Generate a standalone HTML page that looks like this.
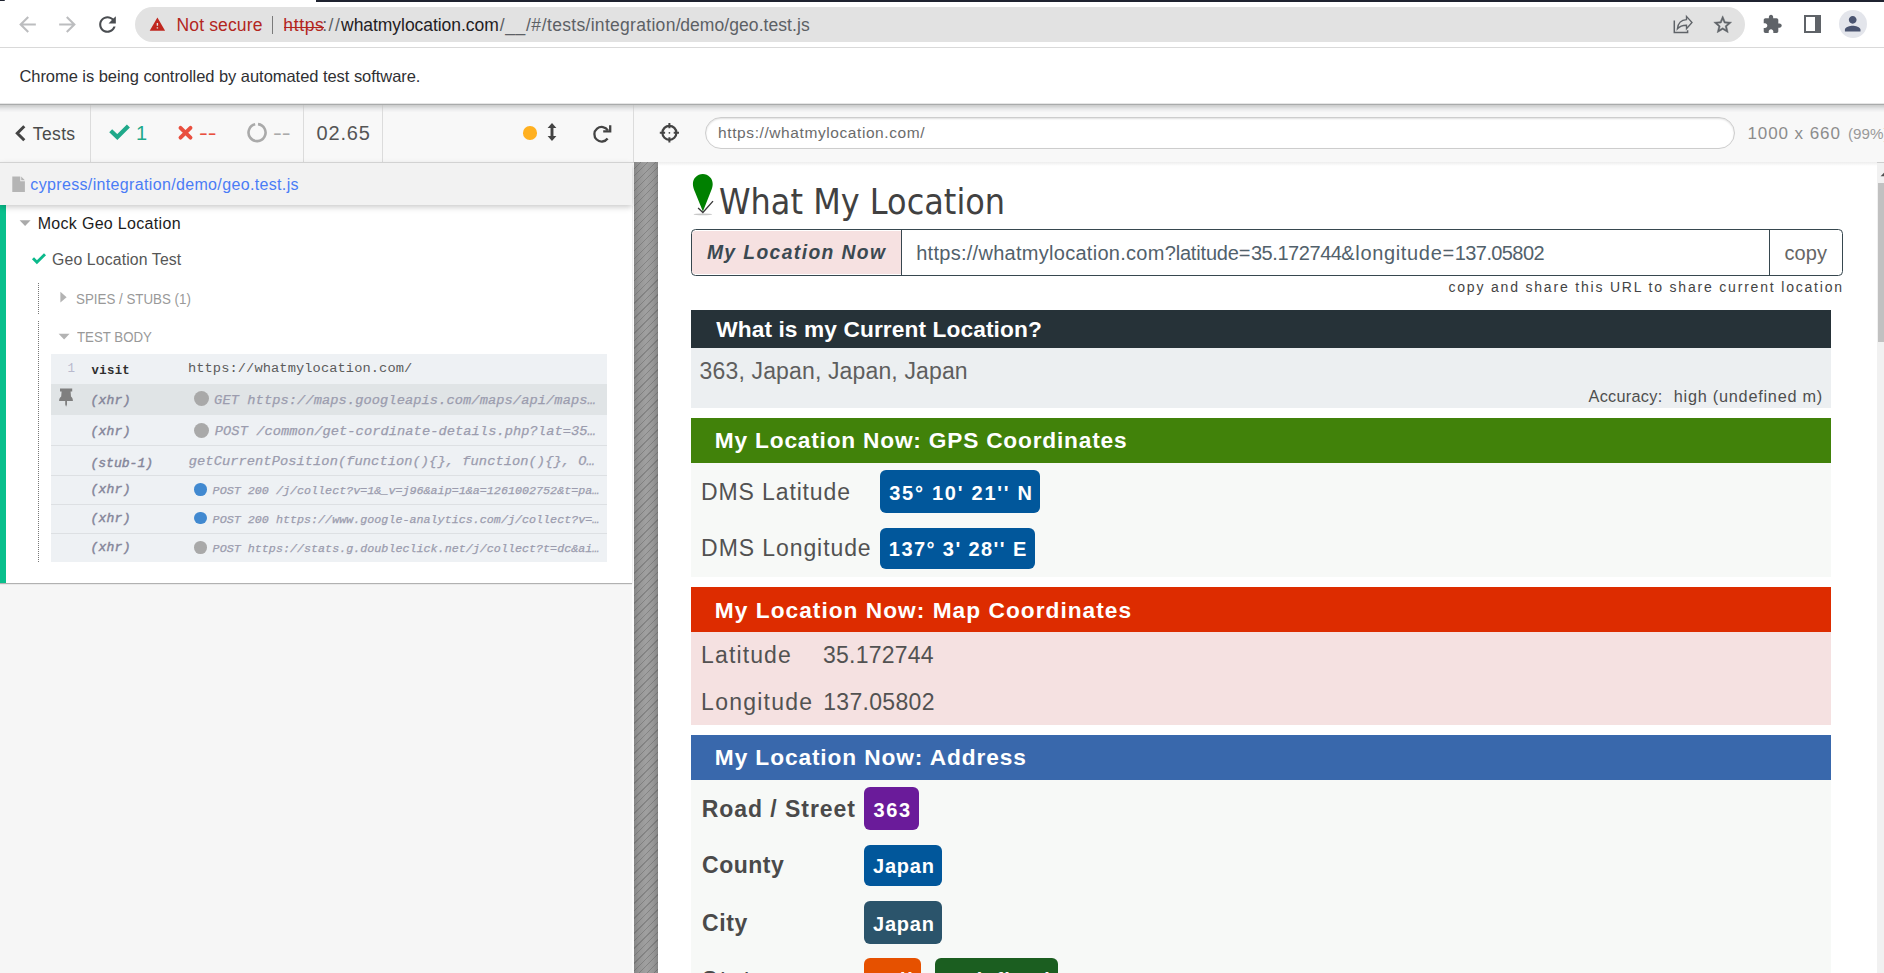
<!DOCTYPE html>
<html lang="en">
<head>
<meta charset="utf-8">
<title>geo.test.js</title>
<style>
*{box-sizing:border-box;margin:0;padding:0}
html,body{width:1884px;height:973px;overflow:hidden;background:#fff;font-family:"Liberation Sans",sans-serif}
#root{position:relative;width:1884px;height:973px;overflow:hidden;background:#fff}
#root div,#root svg{position:absolute}
.t{position:absolute;white-space:pre;line-height:1}
</style>
</head>
<body>
<div id="root">
<!-- browser toolbar -->
<div style="left:316px;top:0px;width:1568px;height:1.7px;background:#1f2330"></div>
<div style="left:0px;top:0px;width:5px;height:1px;background:#1f2330;border-radius:0 0 5px 0"></div>
<div style="left:134.7px;top:6.8px;width:1610.3px;height:35.3px;border-radius:18px;background:#e2e2e2"></div>
<div style="left:0px;top:47px;width:1884px;height:1px;background:#d9d9d9"></div>
<svg style="left:14.8px;top:11.6px;" width="25" height="25" viewBox="0 0 24 24"><path fill="#bcbdbf" d="M20 11H7.83l5.59-5.59L12 4l-8 8 8 8 1.41-1.41L7.83 13H20v-2z"/></svg>
<svg style="left:55px;top:11.6px;" width="25" height="25" viewBox="0 0 24 24"><path fill="#bcbdbf" d="M12 4l-1.41 1.41L16.17 11H4v2h12.17l-5.58 5.59L12 20l8-8z"/></svg>
<svg style="left:94.7px;top:11.6px;" width="25" height="25" viewBox="0 0 24 24"><path fill="#4a4d51" d="M17.65 6.35C16.2 4.9 14.21 4 12 4c-4.42 0-7.99 3.58-7.99 8s3.57 8 7.99 8c3.73 0 6.84-2.55 7.73-6h-2.08c-.82 2.33-3.04 4-5.65 4-3.31 0-6-2.69-6-6s2.69-6 6-6c1.66 0 3.14.69 4.22 1.78L13 11h7V4l-2.35 2.35z"/></svg>
<svg style="left:149.3px;top:16.3px;" width="16.8" height="16.8" viewBox="0 0 24 24"><path fill="#c0271f" d="M1 21h22L12 2 1 21zm12-3h-2v-2h2v2zm0-4h-2v-4h2v4z"/></svg>
<div style="left:271.6px;top:15.8px;width:1.4px;height:18.4px;background:#7a7a7a"></div>
<div style="left:284.1px;top:26.7px;width:39.7px;height:1.2px;background:#b3261e"></div>
<svg style="left:1672px;top:14px;" width="22" height="22" viewBox="0 0 22 22"><g fill="none" stroke="#5f6368" stroke-width="1.35" stroke-linejoin="miter"><path d="M2.3 6.500V18.600H15.600V16.200" stroke-width="1.5"/><path d="M5.400 14.800C6 9.500 9.500 6 14.500 5.700V2.400L20 8.500 14.500 14.800V11.200C10.500 11.200 7.500 12.300 5.400 14.800Z"/></g></svg>
<svg style="left:1711.8px;top:14.1px;" width="21.4" height="21.4" viewBox="0 0 24 24"><path fill="#5f6368" stroke="#5f6368" stroke-width="0.5" d="M22 9.24l-7.19-.62L12 2 9.19 8.63 2 9.24l5.46 4.73L5.82 21 12 17.27 18.18 21l-1.63-7.03L22 9.24zM12 15.4l-3.76 2.27 1-4.28-3.32-2.88 4.38-.38L12 6.1l1.71 4.04 4.38.38-3.32 2.88 1 4.28L12 15.4z"/></svg>
<svg style="left:1762px;top:14.3px;" width="20.6" height="20.6" viewBox="0 0 24 24"><path fill="#5f6368" d="M20.5 11H19V7c0-1.1-.9-2-2-2h-4V3.5C13 2.12 11.88 1 10.5 1S8 2.12 8 3.5V5H4c-1.1 0-1.99.9-1.99 2v3.8H3.5c1.49 0 2.7 1.21 2.7 2.7s-1.21 2.7-2.7 2.7H2V20c0 1.1.9 2 2 2h3.8v-1.5c0-1.49 1.21-2.7 2.7-2.7 1.49 0 2.7 1.21 2.7 2.7V22H17c1.1 0 2-.9 2-2v-4h1.5c1.38 0 2.5-1.12 2.5-2.5S21.88 11 20.5 11z"/></svg>
<div style="left:1803.8px;top:15.2px;width:17.5px;height:17.8px;border:2.2px solid #5f6368;border-right-width:6px"></div>
<div style="left:1839px;top:10px;width:28px;height:28px;border-radius:50%;background:#e3e5eb"></div>
<svg style="left:1841.1px;top:12.2px;" width="23.4" height="23.4" viewBox="0 0 24 24"><path fill="#4a5470" d="M12 12c2.21 0 4-1.79 4-4s-1.79-4-4-4-4 1.79-4 4 1.79 4 4 4zm0 2c-2.67 0-8 1.34-8 4v2h16v-2c0-2.66-5.33-4-8-4z"/></svg>
<!-- cypress header -->
<div style="left:0px;top:103px;width:1884px;height:1px;background:#e6e6e6"></div>
<div style="left:0px;top:104px;width:1884px;height:58px;background:linear-gradient(#a9abab 0,#a9abab 1px,#cbcccc 1px,#d4d5d5 2.5px,#e4e5e6 4.5px,#f0f0f1 6.5px,#f8f8f8 8.5px);"></div>
<div style="left:90px;top:105px;width:1px;height:57px;background:linear-gradient(#c4c4c4,#dcdcdc 6px)"></div>
<div style="left:303px;top:105px;width:1px;height:57px;background:linear-gradient(#c4c4c4,#dcdcdc 6px)"></div>
<div style="left:382px;top:105px;width:1px;height:57px;background:linear-gradient(#c4c4c4,#dcdcdc 6px)"></div>
<div style="left:633px;top:105px;width:1px;height:57px;background:linear-gradient(#c4c4c4,#dcdcdc 6px)"></div>
<svg style="left:13px;top:122px;" width="16" height="22" viewBox="0 0 16 22"><path d="M11.300 4.200 4.300 11.200l7 7" fill="none" stroke="#444" stroke-width="3"/></svg>
<svg style="left:107px;top:122px;" width="26" height="22" viewBox="0 0 26 22"><path d="M3.7 8.7l6.6 6.4L21.4 3.9" fill="none" stroke="#1fa98a" stroke-width="4.2"/></svg>
<svg style="left:176px;top:123px;" width="20" height="20" viewBox="0 0 20 20"><path d="M4.5 4.8l10 9.8M14.5 4.8L4.5 14.6" fill="none" stroke="#e94f3f" stroke-width="3.9" stroke-linecap="round"/></svg>
<svg style="left:245px;top:121px;" width="24" height="24" viewBox="0 0 24 24"><path d="M10.2 3.3A8.5 8.5 0 1 0 13 3.15" fill="none" stroke="#aaaaaa" stroke-width="2.6"/></svg>
<div style="left:523.4px;top:126.1px;width:13.6px;height:13.6px;border-radius:50%;background:#ffb020"></div>
<svg style="left:545px;top:121px;" width="14" height="22" viewBox="0 0 14 22"><path d="M7 2l4.4 5H8.45v8.1H11.4L7 20.1 2.6 15.1H5.55V7H2.6z" fill="#444"/></svg>
<svg style="left:591px;top:123px;" width="22" height="22" viewBox="0 0 22 22"><g fill="none" stroke="#444" stroke-width="2.3"><path d="M16.9 7.4A7.3 7.3 0 1 0 16.6 15.5"/><path d="M19.2 2.3V8.4H12.2"/></g></svg>
<svg style="left:659px;top:122px;" width="21" height="21" viewBox="0 0 21 21"><g fill="none" stroke="#444" stroke-width="2.2"><circle cx="10.4" cy="10.8" r="7"/><path d="M10.4 1v5.3M10.4 15.3v5.3M0.8 10.8h5.3M14.7 10.8h5.3" stroke-width="2"/></g><circle cx="10.4" cy="10.8" r="0.9" fill="#444"/></svg>
<div style="left:705px;top:117px;width:1030px;height:32px;border:1px solid #cdcdcd;border-radius:16px;background:#fff;box-shadow:inset 0 1px 2px rgba(0,0,0,.13)"></div>
<!-- reporter -->
<div style="left:0px;top:162px;width:632px;height:811px;background:#f6f6f6"></div>
<div style="left:632px;top:162px;width:2px;height:811px;background:#fbfbfb"></div>
<div style="left:0px;top:205px;width:632px;height:378.2px;background:#fff;box-shadow:0 1px 1px rgba(0,0,0,.28)"></div>
<div style="left:0px;top:205px;width:6.2px;height:378.2px;background:#09bf8c"></div>
<div style="left:0px;top:162.6px;width:632px;height:42.6px;background:#f2f2f2;box-shadow:0 2px 6px rgba(0,0,0,.22)"></div>
<div style="left:0px;top:161.7px;width:634px;height:1px;background:#d2d2d2"></div>
<div style="left:634px;top:161.7px;width:1250px;height:1px;background:#dadada"></div>
<svg style="left:12px;top:176px;" width="14" height="17" viewBox="0 0 14 17"><path d="M0.3 0.6h8v4.6h4.6V16H0.3z M9.2 0.6l3.7 3.7H9.2z" fill="#b5b5b5"/></svg>
<svg style="left:19px;top:219px;" width="13" height="8" viewBox="0 0 13 8"><path d="M0.6 1.3h11L6.1 6.9z" fill="#aaa"/></svg>
<svg style="left:31px;top:252px;" width="16" height="13" viewBox="0 0 16 13"><path d="M2 6.300l3.900 3.900L14 2.300" fill="none" stroke="#0bb98b" stroke-width="2.900"/></svg>
<div style="left:38.1px;top:282.6px;width:1px;height:32.6px;background:repeating-linear-gradient(#777 0 1px,transparent 1px 2px)"></div>
<div style="left:38.1px;top:321px;width:1px;height:241px;background:repeating-linear-gradient(#777 0 1px,transparent 1px 2px)"></div>
<svg style="left:60px;top:291px;" width="8" height="13" viewBox="0 0 8 13"><path d="M0.4 0.8v10.8l6.2-5.4z" fill="#b3b3b3"/></svg>
<svg style="left:57.5px;top:332.5px;" width="13" height="8" viewBox="0 0 13 8"><path d="M0.6 0.8h11L6.1 6.5z" fill="#b3b3b3"/></svg>
<div style="left:51px;top:353.7px;width:556px;height:30.3px;background:#eef1f4;"></div>
<div style="left:51px;top:384px;width:556px;height:30.6px;background:#e0e4e6;"></div>
<div style="left:51px;top:414.6px;width:556px;height:31.4px;background:#eef1f4;border-bottom:1px solid #dde0e3;"></div>
<div style="left:51px;top:446px;width:556px;height:30px;background:#eef1f4;border-bottom:1px solid #dde0e3;"></div>
<div style="left:51px;top:476px;width:556px;height:29px;background:#eef1f4;border-bottom:1px solid #dde0e3;"></div>
<div style="left:51px;top:505px;width:556px;height:29px;background:#eef1f4;border-bottom:1px solid #dde0e3;"></div>
<div style="left:51px;top:534px;width:556px;height:27.6px;background:#eef1f4;"></div>
<svg style="left:58px;top:387.5px;" width="17" height="20" viewBox="0 0 17 20"><path d="M2 0.6H14.2V3.4H12.6L13 8.4C14.5 9.5 14.9 11.1 14.9 13H9V16.6L8.1 18.8 7.2 16.6V13H1.1C1.1 11.100 1.600 9.500 3.200 8.400L3.600 3.400H2Z" fill="#7f7f7f"/></svg>
<div style="left:193.8px;top:390.9px;width:15.0px;height:15.0px;border-radius:50%;background:#a9a9a9"></div>
<div style="left:193.8px;top:422.9px;width:15.0px;height:15.0px;border-radius:50%;background:#a9a9a9"></div>
<div style="left:194.15px;top:482.85px;width:12.7px;height:12.7px;border-radius:50%;background:#4189d0"></div>
<div style="left:194.15px;top:511.7px;width:12.7px;height:12.7px;border-radius:50%;background:#4189d0"></div>
<div style="left:194.15px;top:540.85px;width:12.7px;height:12.7px;border-radius:50%;background:#a9a9a9"></div>
<!-- app under test -->
<div style="left:634px;top:162.4px;width:24px;height:811px;background:linear-gradient(90deg,#868686 0,#959595 20%,#a0a0a0 50%,#979797 80%,#858585 100%)"></div>
<div style="left:634px;top:162.4px;width:24px;height:811px;background:repeating-linear-gradient(135deg,rgba(0,0,0,0) 0 4.3px,rgba(40,40,40,.22) 4.3px 5.3px)"></div>
<div style="left:658px;top:162.4px;width:1219px;height:811px;background:#fff"></div>
<div style="left:657.8px;top:162.4px;width:1226px;height:4px;background:linear-gradient(rgba(0,0,0,.07),rgba(0,0,0,0))"></div>
<div style="left:1876.5px;top:162.5px;width:7.5px;height:811px;background:#f1f1f1"></div>
<div style="left:1877.8px;top:183px;width:6.2px;height:159px;background:#c1c1c1"></div>
<svg style="left:1877px;top:170px;" width="7" height="8" viewBox="0 0 7 8"><path d="M3.6 6.200L7 2.800V6.200z" fill="#505050"/></svg>
<svg style="left:690px;top:172px;" width="26" height="46" viewBox="0 0 26 46"><ellipse cx="12.9" cy="42.4" rx="9.3" ry="0.9" fill="#444" opacity=".3"/><path d="M12.8 2C18.3 2 22.7 6.4 22.7 12C22.7 14.7 21.8 17.2 20.6 19.9L12.9 39.6 5 19.9C3.8 17.2 2.9 14.7 2.9 12 2.9 6.4 7.3 2 12.8 2Z" fill="#008000"/><path d="M8.1 35.9L12.9 40.5 23 29.1" fill="none" stroke="#3a3a3a" stroke-width="1.35"/></svg>
<div style="left:690.8px;top:229.4px;width:1152.4px;height:46.3px;border:1.2px solid #37474f;border-radius:4.5px;background:#fff"></div>
<div style="left:692px;top:230.6px;width:209px;height:43.9px;background:#f6e1e1;border-radius:3.5px 0 0 3.5px"></div>
<div style="left:900.6px;top:229.4px;width:1.2px;height:46.3px;background:#37474f"></div>
<div style="left:1768.7px;top:229.4px;width:1.2px;height:46.3px;background:#37474f"></div>
<div style="left:690.5px;top:309.5px;width:1140.7px;height:38.5px;background:#263238"></div>
<div style="left:690.5px;top:348px;width:1140.7px;height:59.9px;background:#eceff1"></div>
<div style="left:690.5px;top:417.7px;width:1140.7px;height:45.5px;background:#41820a"></div>
<div style="left:690.5px;top:463.2px;width:1140.7px;height:114px;background:#f7f9f7"></div>
<div style="left:690.5px;top:587.2px;width:1140.7px;height:45.1px;background:#dd2c00"></div>
<div style="left:690.5px;top:632.3px;width:1140.7px;height:92.5px;background:#f5e1e1"></div>
<div style="left:690.5px;top:734.8px;width:1140.7px;height:44.9px;background:#3968ac"></div>
<div style="left:690.5px;top:779.7px;width:1140.7px;height:194px;background:#f7f9f7"></div>
<div style="left:880.1px;top:470.2px;width:160.4px;height:42.7px;background:#01579b;border-radius:6px"></div>
<div style="left:880.1px;top:527.8px;width:155.4px;height:41.5px;background:#01579b;border-radius:6px"></div>
<div style="left:864.1px;top:787.2px;width:55.4px;height:42.7px;background:#6a1b9a;border-radius:6px"></div>
<div style="left:864.1px;top:844.8px;width:78.3px;height:41.7px;background:#01579b;border-radius:6px"></div>
<div style="left:864.1px;top:901px;width:78.3px;height:42.9px;background:#2b546b;border-radius:6px"></div>
<div style="left:864.1px;top:958.4px;width:57.4px;height:42.6px;background:#e65100;border-radius:6px"></div>
<div style="left:934.5px;top:958.4px;width:123.9px;height:42.6px;background:#1b5e20;border-radius:6px"></div>
<!-- text -->
<span class="t" style='left:176.53px;top:17.32px;color:#b3261e;font-family:"Liberation Sans",sans-serif;font-size:17.5px;font-weight:normal;letter-spacing:0.140px;'>Not secure</span>
<span class="t" style='left:283.31px;top:17.32px;color:#b3261e;font-family:"Liberation Sans",sans-serif;font-size:17.5px;font-weight:normal;letter-spacing:0.649px;'>https</span>
<span class="t" style='left:322.18px;top:17.32px;color:#5c6065;font-family:"Liberation Sans",sans-serif;font-size:17.5px;font-weight:normal;letter-spacing:1.563px;'>://</span>
<span class="t" style='left:341.09px;top:17.32px;color:#1f2023;font-family:"Liberation Sans",sans-serif;font-size:17.5px;font-weight:normal;letter-spacing:-0.051px;'>whatmylocation.com</span>
<span class="t" style='left:499.66px;top:17.32px;color:#5c6065;font-family:"Liberation Sans",sans-serif;font-size:17.5px;font-weight:normal;letter-spacing:0.631px;'>/__/#/</span>
<span class="t" style='left:547.07px;top:17.32px;color:#5c6065;font-family:"Liberation Sans",sans-serif;font-size:17.5px;font-weight:normal;letter-spacing:0.299px;'>tests/integration/</span>
<span class="t" style='left:680.26px;top:17.32px;color:#5c6065;font-family:"Liberation Sans",sans-serif;font-size:17.5px;font-weight:normal;letter-spacing:0.069px;'>demo/geo.test.js</span>
<span class="t" style='left:19.42px;top:68.15px;color:#2f3033;font-family:"Liberation Sans",sans-serif;font-size:16.5px;font-weight:normal;letter-spacing:-0.047px;'>Chrome is being controlled by automated test software.</span>
<span class="t" style='left:32.86px;top:126.02px;color:#4a4a4a;font-family:"Liberation Sans",sans-serif;font-size:17.5px;font-weight:normal;letter-spacing:0.348px;'>Tests</span>
<span class="t" style='left:135.93px;top:123.02px;color:#1fa98a;font-family:"Liberation Sans",sans-serif;font-size:20px;font-weight:normal;'>1</span>
<span class="t" style='left:198.65px;top:123.02px;color:#e94f3f;font-family:"Liberation Sans",sans-serif;font-size:20px;font-weight:normal;transform:scaleX(1.3198);transform-origin:0 0;'>--</span>
<span class="t" style='left:273.35px;top:123.02px;color:#aaaaaa;font-family:"Liberation Sans",sans-serif;font-size:20px;font-weight:normal;transform:scaleX(1.3278);transform-origin:0 0;'>--</span>
<span class="t" style='left:316.55px;top:123.02px;color:#555555;font-family:"Liberation Sans",sans-serif;font-size:20px;font-weight:normal;letter-spacing:0.811px;'>02.65</span>
<span class="t" style='left:718.12px;top:124.82px;color:#6b6b6b;font-family:"Liberation Sans",sans-serif;font-size:15.5px;font-weight:normal;letter-spacing:0.585px;'>https://whatmylocation.com/</span>
<span class="t" style='left:1747.44px;top:125.19px;color:#8c8c8c;font-family:"Liberation Sans",sans-serif;font-size:17px;font-weight:normal;letter-spacing:0.920px;'>1000 x 660</span>
<span class="t" style='left:1848.05px;top:126.33px;color:#9a9a9a;font-family:"Liberation Sans",sans-serif;font-size:15.2px;font-weight:normal;'>(99%)</span>
<span class="t" style='left:30.34px;top:177.47px;color:#4a7cf6;font-family:"Liberation Sans",sans-serif;font-size:16px;font-weight:normal;letter-spacing:0.345px;'>cypress/integration/demo/geo.test.js</span>
<span class="t" style='left:37.64px;top:215.87px;color:#1c1c1c;font-family:"Liberation Sans",sans-serif;font-size:16px;font-weight:normal;letter-spacing:0.318px;'>Mock Geo Location</span>
<span class="t" style='left:52.12px;top:251.88px;color:#565656;font-family:"Liberation Sans",sans-serif;font-size:15.8px;font-weight:normal;letter-spacing:0.129px;'>Geo Location Test</span>
<span class="t" style='left:76.08px;top:292.44px;color:#999999;font-family:"Liberation Sans",sans-serif;font-size:14.5px;font-weight:normal;transform:scaleX(0.9196);transform-origin:0 0;'>SPIES / STUBS (1)</span>
<span class="t" style='left:76.94px;top:330.34px;color:#999999;font-family:"Liberation Sans",sans-serif;font-size:14.5px;font-weight:normal;transform:scaleX(0.9143);transform-origin:0 0;'>TEST BODY</span>
<span class="t" style='left:67.48px;top:363.09px;color:#b9bace;font-family:"Liberation Mono","DejaVu Sans Mono",monospace;font-size:12.5px;font-weight:normal;'>1</span>
<span class="t" style='left:91.49px;top:364.64px;color:#2e2e2e;font-family:"Liberation Mono","DejaVu Sans Mono",monospace;font-size:12.3px;font-weight:bold;letter-spacing:0.336px;'>visit</span>
<span class="t" style='left:187.90px;top:362.03px;color:#5c5c5c;font-family:"Liberation Mono","DejaVu Sans Mono",monospace;font-size:13.7px;font-weight:normal;letter-spacing:0.100px;'>https://whatmylocation.com/</span>
<span class="t" style='left:90.39px;top:394.18px;color:#85869a;font-family:"Liberation Mono","DejaVu Sans Mono",monospace;font-size:13px;font-weight:normal;font-style:italic;letter-spacing:0.266px;-webkit-text-stroke-width:0.45px;'>(xhr)</span>
<span class="t" style='left:214.09px;top:394.24px;color:#9b9cae;font-family:"Liberation Mono","DejaVu Sans Mono",monospace;font-size:13.7px;font-weight:normal;font-style:italic;letter-spacing:0.086px;-webkit-text-stroke-width:0.25px;'>GET https://maps.googleapis.com/maps/api/maps…</span>
<span class="t" style='left:90.39px;top:424.78px;color:#85869a;font-family:"Liberation Mono","DejaVu Sans Mono",monospace;font-size:13px;font-weight:normal;font-style:italic;letter-spacing:0.266px;-webkit-text-stroke-width:0.45px;'>(xhr)</span>
<span class="t" style='left:214.79px;top:424.84px;color:#9b9cae;font-family:"Liberation Mono","DejaVu Sans Mono",monospace;font-size:13.7px;font-weight:normal;font-style:italic;letter-spacing:0.070px;-webkit-text-stroke-width:0.25px;'>POST /common/get-cordinate-details.php?lat=35…</span>
<span class="t" style='left:90.39px;top:456.58px;color:#85869a;font-family:"Liberation Mono","DejaVu Sans Mono",monospace;font-size:13px;font-weight:normal;font-style:italic;letter-spacing:0.043px;-webkit-text-stroke-width:0.45px;'>(stub-1)</span>
<span class="t" style='left:188.78px;top:455.44px;color:#9b9cae;font-family:"Liberation Mono","DejaVu Sans Mono",monospace;font-size:13.7px;font-weight:normal;font-style:italic;letter-spacing:0.074px;-webkit-text-stroke-width:0.25px;'>getCurrentPosition(function(){}, function(){}, O…</span>
<span class="t" style='left:90.39px;top:483.18px;color:#85869a;font-family:"Liberation Mono","DejaVu Sans Mono",monospace;font-size:13px;font-weight:normal;font-style:italic;letter-spacing:0.266px;-webkit-text-stroke-width:0.45px;'>(xhr)</span>
<span class="t" style='left:212.60px;top:485.97px;color:#9b9cae;font-family:"Liberation Mono","DejaVu Sans Mono",monospace;font-size:11.7px;font-weight:normal;font-style:italic;letter-spacing:0.018px;-webkit-text-stroke-width:0.25px;'>POST 200 /j/collect?v=1&amp;_v=j96&amp;aip=1&amp;a=1261002752&amp;t=pa…</span>
<span class="t" style='left:90.39px;top:512.08px;color:#85869a;font-family:"Liberation Mono","DejaVu Sans Mono",monospace;font-size:13px;font-weight:normal;font-style:italic;letter-spacing:0.266px;-webkit-text-stroke-width:0.45px;'>(xhr)</span>
<span class="t" style='left:212.60px;top:514.87px;color:#9b9cae;font-family:"Liberation Mono","DejaVu Sans Mono",monospace;font-size:11.7px;font-weight:normal;font-style:italic;letter-spacing:0.018px;-webkit-text-stroke-width:0.25px;'>POST 200 https://www.google-analytics.com/j/collect?v=…</span>
<span class="t" style='left:90.39px;top:541.18px;color:#85869a;font-family:"Liberation Mono","DejaVu Sans Mono",monospace;font-size:13px;font-weight:normal;font-style:italic;letter-spacing:0.266px;-webkit-text-stroke-width:0.45px;'>(xhr)</span>
<span class="t" style='left:212.60px;top:544.07px;color:#9b9cae;font-family:"Liberation Mono","DejaVu Sans Mono",monospace;font-size:11.7px;font-weight:normal;font-style:italic;letter-spacing:0.018px;-webkit-text-stroke-width:0.25px;'>POST https://stats.g.doubleclick.net/j/collect?t=dc&amp;ai…</span>
<span class="t" style='left:718.95px;top:183.70px;color:#414141;font-family:"DejaVu Sans Condensed","DejaVu Sans",sans-serif;font-size:35.5px;font-weight:normal;letter-spacing:0.035px;'>What My Location</span>
<span class="t" style='left:706.92px;top:243.40px;color:#3b4951;font-family:"Liberation Sans",sans-serif;font-size:19.3px;font-weight:bold;font-style:italic;letter-spacing:1.399px;'>My Location Now</span>
<span class="t" style='left:916.16px;top:243.02px;color:#52616b;font-family:"Liberation Sans",sans-serif;font-size:20px;font-weight:normal;letter-spacing:0.282px;'>https://whatmylocation.com</span>
<span class="t" style='left:1164.71px;top:243.02px;color:#52616b;font-family:"Liberation Sans",sans-serif;font-size:20px;font-weight:normal;letter-spacing:-0.179px;'>?latitude=</span>
<span class="t" style='left:1250.90px;top:243.02px;color:#52616b;font-family:"Liberation Sans",sans-serif;font-size:20px;font-weight:normal;letter-spacing:-0.430px;'>35.172744</span>
<span class="t" style='left:1341.27px;top:243.02px;color:#52616b;font-family:"Liberation Sans",sans-serif;font-size:20px;font-weight:normal;letter-spacing:0.666px;'>&amp;longitude=</span>
<span class="t" style='left:1454.83px;top:243.02px;color:#52616b;font-family:"Liberation Sans",sans-serif;font-size:20px;font-weight:normal;letter-spacing:-0.605px;'>137.05802</span>
<span class="t" style='left:1784.45px;top:243.02px;color:#666666;font-family:"Liberation Sans",sans-serif;font-size:20px;font-weight:normal;letter-spacing:0.128px;'>copy</span>
<span class="t" style='left:1448.47px;top:280.04px;color:#444444;font-family:"Liberation Sans",sans-serif;font-size:14px;font-weight:normal;letter-spacing:1.808px;'>copy and share this URL to share current location</span>
<span class="t" style='left:716.16px;top:317.90px;color:#ffffff;font-family:"Liberation Sans",sans-serif;font-size:22.7px;font-weight:bold;letter-spacing:0.110px;'>What is my Current Location?</span>
<span class="t" style='left:699.61px;top:360.11px;color:#5e5e5e;font-family:"Liberation Sans",sans-serif;font-size:23.0px;font-weight:normal;letter-spacing:0.145px;'>363, Japan, Japan, Japan</span>
<span class="t" style='left:1588.50px;top:388.11px;color:#4e4e4e;font-family:"Liberation Sans",sans-serif;font-size:16.3px;font-weight:normal;letter-spacing:0.280px;'>Accuracy:</span>
<span class="t" style='left:1673.78px;top:388.11px;color:#4e4e4e;font-family:"Liberation Sans",sans-serif;font-size:16.3px;font-weight:normal;letter-spacing:0.749px;'>high (undefined m)</span>
<span class="t" style='left:714.86px;top:429.40px;color:#ffffff;font-family:"Liberation Sans",sans-serif;font-size:22.7px;font-weight:bold;letter-spacing:0.796px;'>My Location Now: GPS Coordinates</span>
<span class="t" style='left:701.12px;top:480.91px;color:#525252;font-family:"Liberation Sans",sans-serif;font-size:23.0px;font-weight:normal;letter-spacing:0.864px;'>DMS Latitude</span>
<span class="t" style='left:701.12px;top:536.51px;color:#525252;font-family:"Liberation Sans",sans-serif;font-size:23.0px;font-weight:normal;letter-spacing:0.917px;'>DMS Longitude</span>
<span class="t" style='left:889.22px;top:482.90px;color:#ffffff;font-family:"Liberation Sans",sans-serif;font-size:20px;font-weight:bold;letter-spacing:1.745px;'>35° 10&#x27; 21&#x27;&#x27; N</span>
<span class="t" style='left:888.87px;top:538.50px;color:#ffffff;font-family:"Liberation Sans",sans-serif;font-size:20px;font-weight:bold;letter-spacing:1.415px;'>137° 3&#x27; 28&#x27;&#x27; E</span>
<span class="t" style='left:714.86px;top:598.90px;color:#ffffff;font-family:"Liberation Sans",sans-serif;font-size:22.7px;font-weight:bold;letter-spacing:1.026px;'>My Location Now: Map Coordinates</span>
<span class="t" style='left:701.12px;top:643.91px;color:#525252;font-family:"Liberation Sans",sans-serif;font-size:23.0px;font-weight:normal;letter-spacing:1.114px;'>Latitude</span>
<span class="t" style='left:823.01px;top:643.91px;color:#525252;font-family:"Liberation Sans",sans-serif;font-size:23.0px;font-weight:normal;letter-spacing:0.243px;'>35.172744</span>
<span class="t" style='left:701.12px;top:690.81px;color:#525252;font-family:"Liberation Sans",sans-serif;font-size:23.0px;font-weight:normal;letter-spacing:1.245px;'>Longitude</span>
<span class="t" style='left:823.16px;top:690.81px;color:#525252;font-family:"Liberation Sans",sans-serif;font-size:23.0px;font-weight:normal;letter-spacing:0.327px;'>137.05802</span>
<span class="t" style='left:714.86px;top:745.70px;color:#ffffff;font-family:"Liberation Sans",sans-serif;font-size:22.7px;font-weight:bold;letter-spacing:0.897px;'>My Location Now: Address</span>
<span class="t" style='left:701.63px;top:798.20px;color:#4a4a4a;font-family:"Liberation Sans",sans-serif;font-size:23.0px;font-weight:bold;letter-spacing:0.960px;'>Road / Street</span>
<span class="t" style='left:873.42px;top:800.20px;color:#ffffff;font-family:"Liberation Sans",sans-serif;font-size:20px;font-weight:bold;letter-spacing:1.633px;'>363</span>
<span class="t" style='left:702.08px;top:853.80px;color:#4a4a4a;font-family:"Liberation Sans",sans-serif;font-size:23.0px;font-weight:bold;letter-spacing:0.482px;'>County</span>
<span class="t" style='left:873.00px;top:855.80px;color:#ffffff;font-family:"Liberation Sans",sans-serif;font-size:20px;font-weight:bold;letter-spacing:0.770px;'>Japan</span>
<span class="t" style='left:702.08px;top:911.70px;color:#4a4a4a;font-family:"Liberation Sans",sans-serif;font-size:23.0px;font-weight:bold;letter-spacing:0.579px;'>City</span>
<span class="t" style='left:873.00px;top:913.70px;color:#ffffff;font-family:"Liberation Sans",sans-serif;font-size:20px;font-weight:bold;letter-spacing:0.770px;'>Japan</span>
<span class="t" style='left:702.05px;top:969.00px;color:#4a4a4a;font-family:"Liberation Sans",sans-serif;font-size:23.0px;font-weight:bold;letter-spacing:1.660px;'>State</span>
<span class="t" style='left:872.11px;top:969.60px;color:#ffffff;font-family:"Liberation Sans",sans-serif;font-size:20px;font-weight:bold;letter-spacing:1.732px;'>null</span>
<span class="t" style='left:942.70px;top:969.60px;color:#ffffff;font-family:"Liberation Sans",sans-serif;font-size:20px;font-weight:bold;letter-spacing:1.443px;'>undefined</span>
</div>
</body>
</html>
